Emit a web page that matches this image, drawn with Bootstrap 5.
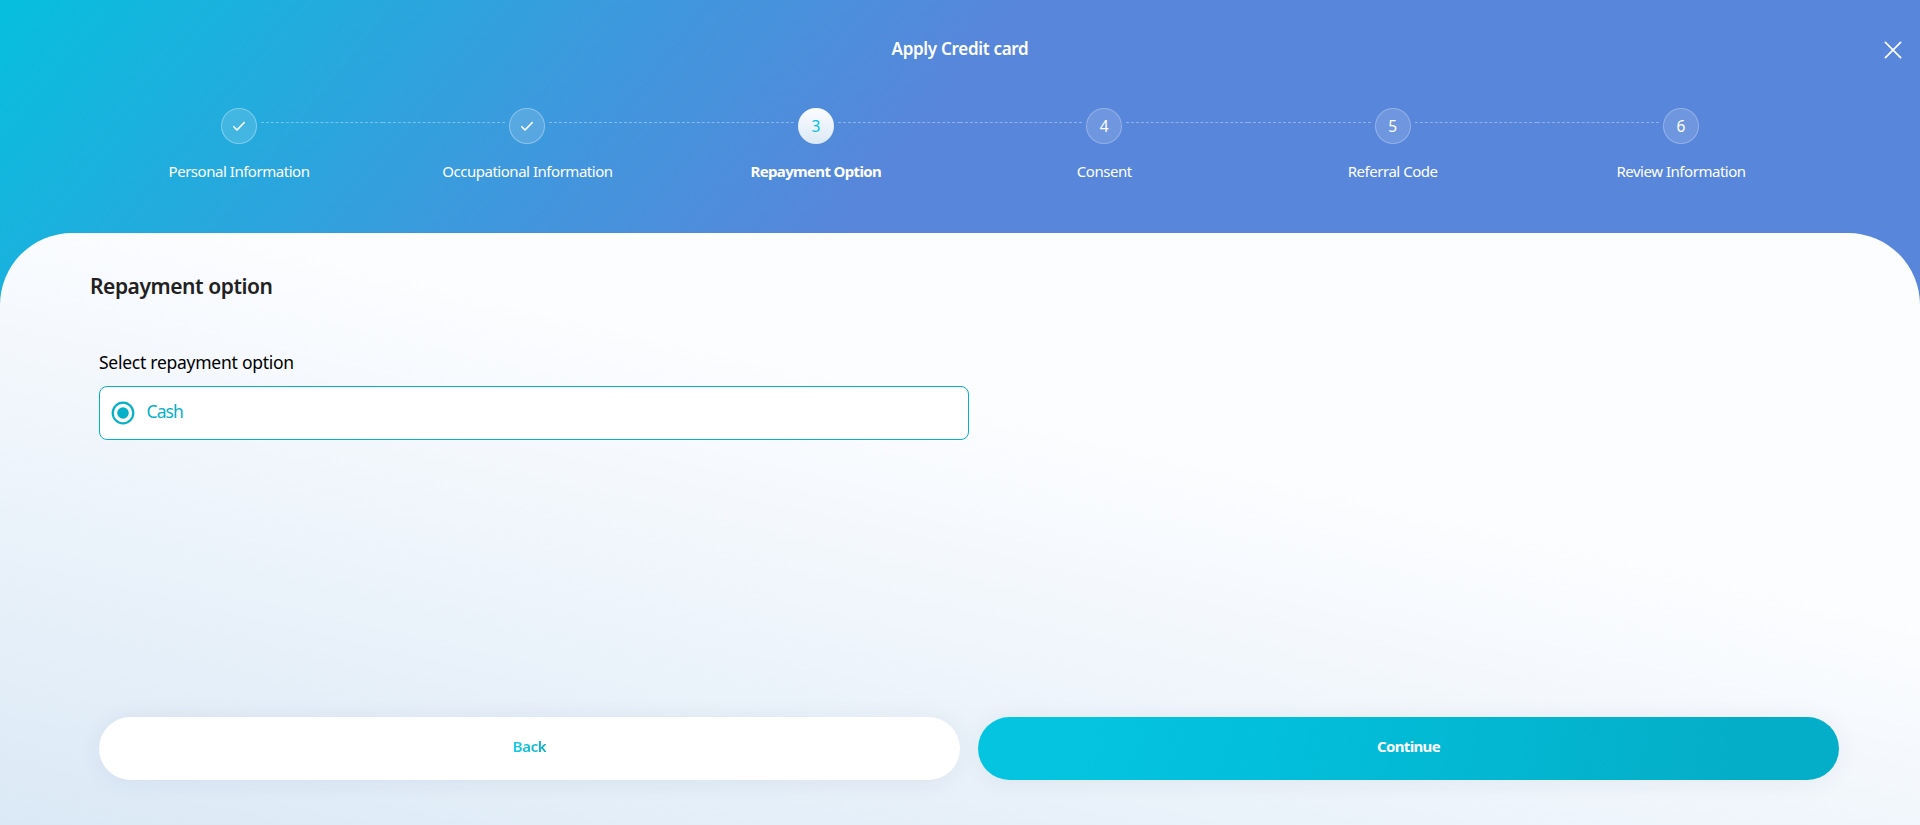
<!DOCTYPE html>
<html lang="en">
<head>
<meta charset="utf-8">
<meta name="viewport" content="width=device-width, initial-scale=1">
<title>Apply Credit card</title>
<link href="https://cdn.jsdelivr.net/npm/bootstrap@5.3.0/dist/css/bootstrap.min.css" rel="stylesheet">
<style>
  body { font-family: "Noto Sans", "Open Sans", sans-serif; background: linear-gradient(129deg, #06bfde 0, #3d99dd 497px, #5886da 798px); background-attachment: fixed; }
  .top-bar { display: grid; grid-template-columns: 1fr auto 1fr; height: 48px; margin-top: 24px; padding: 0 16px; }
  .top-title { grid-column: 2; align-self: start; margin-top: 12.5px; font-size: 17px; line-height: 24px; font-weight: 600; letter-spacing: -.3px; }
  .close-btn { align-self: start; width: 22px; height: 22px; margin-top: 14.5px; }
  .steps { width: 1730.4px; margin: 36px 0 0 94.8px; }
  .step { flex: 1 1 0; }
  .step-mark { width: 36px; height: 36px; border: 1px solid rgba(255,255,255,.25); background: rgba(255,255,255,.14); font-size: 15.5px; line-height: 35px; }
  .step.done .step-mark { border-color: rgba(255,255,255,.32); }
  .step.active .step-mark { border: 0; line-height: 37px; background: linear-gradient(0deg, #dbe9f6, #fcfdff); color: #06c0dc; }
  .dash { flex: 1 1 0; height: 0; margin-bottom: 7px; border-top: 1px dashed rgba(255,255,255,.36); }
  .dash-left { margin-right: 4px; }
  .dash-right { margin-left: 4px; }
  .step:first-child .dash-left, .step:last-child .dash-right { visibility: hidden; }
  .step-label { margin-top: 15px; font-size: 15px; line-height: 24px; letter-spacing: -.47px; }
  .step.active .step-label { font-weight: 700; letter-spacing: -.65px; }
  .sheet { margin-top: 50px; min-height: 592px; border-radius: 72px 72px 0 0; padding: 37px 81px 45px 90px; background: linear-gradient(13deg, #dbe9f6, #fcfdff 632px); }
  .sheet-title { font-size: 21px; line-height: 32px; font-weight: 600; letter-spacing: -.44px; color: #212121; }
  .field { width: 870px; margin: 48px 0 0 9px; }
  .field-label { font-size: 17.5px; line-height: 24px; letter-spacing: -.26px; color: #000; }
  .option { height: 54px; margin-top: 12px; padding-left: 11px; gap: 11.5px; border: 1px solid #06b0c8; border-radius: 8px; color: #06b0c8; font-size: 17.5px; line-height: 24px; letter-spacing: -.9px; }
  .option-text { margin-bottom: 4px; }
  .actions { gap: 18px; margin-left: 9px; }
  .pill { flex: 1 1 0; height: 63px; border: 0; border-radius: 32px; padding: 0 0 5px; font-size: 15px; line-height: 24px; font-weight: 600; letter-spacing: -.4px; box-shadow: 0 2px 24px rgba(40,50,90,.065); }
  .pill-back, .pill-back:hover { background: #fff; }
  .pill-back span { background: linear-gradient(90deg, #16cbe6, #04aec8); background-clip: text; -webkit-background-clip: text; color: transparent; }
  .pill-next, .pill-next:hover { background: linear-gradient(100deg, #05c4e0 12%, #02c0dc 30%, #04aec8 88%); color: #fff; font-weight: 700; letter-spacing: -.65px; }
</style>
</head>
<body class="vh-100 overflow-hidden d-flex flex-column">
<header class="text-white">
  <div class="top-bar">
    <h1 class="top-title mb-0">Apply Credit card</h1>
    <button class="close-btn btn p-0 border-0 d-flex ms-auto" aria-label="Close">
      <svg width="22" height="22" viewBox="0 0 22 22" fill="none" stroke="#fff" stroke-width="1.7" stroke-linecap="round"><path d="M3.4 3.4 18.6 18.6M18.6 3.4 3.4 18.6"/></svg>
    </button>
  </div>
  <div class="steps d-flex text-center">
    <div class="step done">
      <div class="d-flex align-items-center"><i class="dash dash-left"></i><div class="step-mark rounded-circle d-flex align-items-center justify-content-center"><svg width="14" height="12" viewBox="0 0 14 12" fill="none" stroke="#fff" stroke-width="1.6" stroke-linecap="round" stroke-linejoin="round"><path d="M1.8 6.7 5 10 12.2 2.6"/></svg></div><i class="dash dash-right"></i></div>
      <div class="step-label">Personal Information</div>
    </div>
    <div class="step done">
      <div class="d-flex align-items-center"><i class="dash dash-left"></i><div class="step-mark rounded-circle d-flex align-items-center justify-content-center"><svg width="14" height="12" viewBox="0 0 14 12" fill="none" stroke="#fff" stroke-width="1.6" stroke-linecap="round" stroke-linejoin="round"><path d="M1.8 6.7 5 10 12.2 2.6"/></svg></div><i class="dash dash-right"></i></div>
      <div class="step-label">Occupational Information</div>
    </div>
    <div class="step active">
      <div class="d-flex align-items-center"><i class="dash dash-left"></i><div class="step-mark rounded-circle">3</div><i class="dash dash-right"></i></div>
      <div class="step-label">Repayment Option</div>
    </div>
    <div class="step">
      <div class="d-flex align-items-center"><i class="dash dash-left"></i><div class="step-mark rounded-circle">4</div><i class="dash dash-right"></i></div>
      <div class="step-label">Consent</div>
    </div>
    <div class="step">
      <div class="d-flex align-items-center"><i class="dash dash-left"></i><div class="step-mark rounded-circle">5</div><i class="dash dash-right"></i></div>
      <div class="step-label">Referral Code</div>
    </div>
    <div class="step">
      <div class="d-flex align-items-center"><i class="dash dash-left"></i><div class="step-mark rounded-circle">6</div><i class="dash dash-right"></i></div>
      <div class="step-label">Review Information</div>
    </div>
  </div>
</header>
<main class="sheet d-flex flex-column flex-grow-1">
  <h2 class="sheet-title mb-0">Repayment option</h2>
  <div class="field">
    <div class="field-label">Select repayment option</div>
    <label class="option bg-white d-flex align-items-center">
      <svg width="24" height="24" viewBox="0 0 24 24"><circle cx="12" cy="12" r="10.3" fill="none" stroke="#06b0c8" stroke-width="2.2"/><circle cx="12" cy="12" r="5.8" fill="#06b0c8"/></svg>
      <span class="option-text">Cash</span>
    </label>
  </div>
  <div class="actions d-flex mt-auto">
    <button class="btn pill pill-back"><span>Back</span></button>
    <button class="btn pill pill-next">Continue</button>
  </div>
</main>
<script src="https://cdn.jsdelivr.net/npm/bootstrap@5.3.0/dist/js/bootstrap.bundle.min.js"></script>
</body>
</html>
